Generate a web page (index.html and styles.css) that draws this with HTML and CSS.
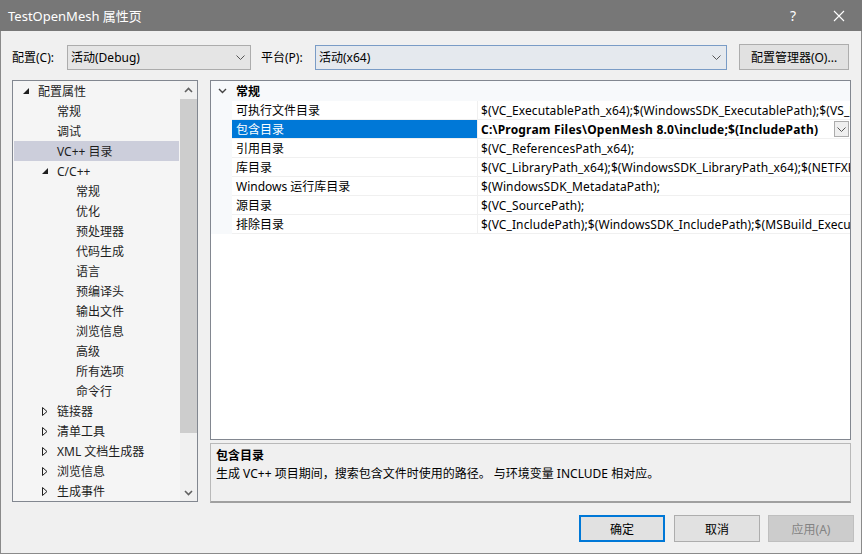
FILE: index.html
```html
<!DOCTYPE html>
<html>
<head lang="zh">
    <meta charset="utf-8">
    <title>TestOpenMesh 属性页</title>
    <link rel="stylesheet" href="styles.css">
</head>
<body>
<div class="window">
    <div class="titlebar">
        <span class="title">TestOpenMesh 属性页</span>
        <span class="cap help">?</span>
        <span class="cap close">
            <svg width="12" height="12" viewBox="0 0 12 12"><path d="M1 1L11 11M11 1L1 11" stroke="#fff" stroke-width="1.1" fill="none"/></svg>
        </span>
    </div>

    <div class="toolbar">
        <span class="lbl lbl-cfg">配置(C):</span>
        <div class="combo combo-cfg">
            <span class="combo-text">活动(Debug)</span>
            <svg width="9" height="5" viewBox="0 0 9 5"><polyline points="0.5,0.5 4.5,4.5 8.5,0.5" stroke="#555" fill="none"/></svg>
        </div>
        <span class="lbl lbl-plat">平台(P):</span>
        <div class="combo combo-plat">
            <span class="combo-text">活动(x64)</span>
            <svg width="9" height="5" viewBox="0 0 9 5"><polyline points="0.5,0.5 4.5,4.5 8.5,0.5" stroke="#555" fill="none"/></svg>
        </div>
        <div class="btn btn-mgr">配置管理器(O)...</div>
    </div>

    <div class="main">
        <div class="tree">
            <div class="tree-list">
                <div class="trow l0"><span class="arrow"><svg width="6" height="6" viewBox="0 0 6 6"><polygon points="6,0 6,6 0,6" fill="#1e1e1e"/></svg></span>配置属性</div>
                <div class="trow l1"><span class="arrow"></span>常规</div>
                <div class="trow l1"><span class="arrow"></span>调试</div>
                <div class="trow l1 sel"><span class="arrow"></span>VC++ 目录</div>
                <div class="trow l1"><span class="arrow"><svg width="6" height="6" viewBox="0 0 6 6"><polygon points="6,0 6,6 0,6" fill="#1e1e1e"/></svg></span>C/C++</div>
                <div class="trow l2"><span class="arrow"></span>常规</div>
                <div class="trow l2"><span class="arrow"></span>优化</div>
                <div class="trow l2"><span class="arrow"></span>预处理器</div>
                <div class="trow l2"><span class="arrow"></span>代码生成</div>
                <div class="trow l2"><span class="arrow"></span>语言</div>
                <div class="trow l2"><span class="arrow"></span>预编译头</div>
                <div class="trow l2"><span class="arrow"></span>输出文件</div>
                <div class="trow l2"><span class="arrow"></span>浏览信息</div>
                <div class="trow l2"><span class="arrow"></span>高级</div>
                <div class="trow l2"><span class="arrow"></span>所有选项</div>
                <div class="trow l2"><span class="arrow"></span>命令行</div>
                <div class="trow l1"><span class="arrow"><svg width="6" height="9" viewBox="0 0 6 9"><polygon points="0.5,0.5 5,4.5 0.5,8.5" stroke="#1e1e1e" fill="none"/></svg></span>链接器</div>
                <div class="trow l1"><span class="arrow"><svg width="6" height="9" viewBox="0 0 6 9"><polygon points="0.5,0.5 5,4.5 0.5,8.5" stroke="#1e1e1e" fill="none"/></svg></span>清单工具</div>
                <div class="trow l1"><span class="arrow"><svg width="6" height="9" viewBox="0 0 6 9"><polygon points="0.5,0.5 5,4.5 0.5,8.5" stroke="#1e1e1e" fill="none"/></svg></span>XML 文档生成器</div>
                <div class="trow l1"><span class="arrow"><svg width="6" height="9" viewBox="0 0 6 9"><polygon points="0.5,0.5 5,4.5 0.5,8.5" stroke="#1e1e1e" fill="none"/></svg></span>浏览信息</div>
                <div class="trow l1"><span class="arrow"><svg width="6" height="9" viewBox="0 0 6 9"><polygon points="0.5,0.5 5,4.5 0.5,8.5" stroke="#1e1e1e" fill="none"/></svg></span>生成事件</div>
            </div>
            <div class="vscroll">
                <div class="sb-btn"><svg width="9" height="6" viewBox="0 0 9 6"><polyline points="1,5 4.5,1.5 8,5" stroke="#606060" stroke-width="1.6" fill="none"/></svg></div>
                <div class="sb-track"><div class="sb-thumb"></div></div>
                <div class="sb-btn"><svg width="9" height="6" viewBox="0 0 9 6"><polyline points="1,1 4.5,4.5 8,1" stroke="#606060" stroke-width="1.6" fill="none"/></svg></div>
            </div>
        </div>

        <div class="right">
            <div class="grid">
                <div class="cat">
                    <span class="cat-arrow"><svg width="9" height="6" viewBox="0 0 9 6"><polyline points="1,1 4.5,4.5 8,1" stroke="#444" stroke-width="1.4" fill="none"/></svg></span>
                    <b>常规</b>
                </div>
                <div class="prop"><div class="pname">可执行文件目录</div><div class="pval">$(VC_ExecutablePath_x64);$(WindowsSDK_ExecutablePath);$(VS_ExecutablePath);$(MSBuild_ExecutablePath);$(FxCopDir);$(PATH);</div></div>
                <div class="prop sel"><div class="pname">包含目录</div><div class="pval"><b>C:\Program Files\OpenMesh 8.0\include;$(IncludePath)</b><span class="drop"><svg width="9" height="5" viewBox="0 0 9 5"><polyline points="0.5,0.5 4.5,4.5 8.5,0.5" stroke="#555" fill="none"/></svg></span></div></div>
                <div class="prop"><div class="pname">引用目录</div><div class="pval">$(VC_ReferencesPath_x64);</div></div>
                <div class="prop"><div class="pname">库目录</div><div class="pval">$(VC_LibraryPath_x64);$(WindowsSDK_LibraryPath_x64);$(NETFXKitsDir)Lib\um\x64</div></div>
                <div class="prop"><div class="pname">Windows 运行库目录</div><div class="pval">$(WindowsSDK_MetadataPath);</div></div>
                <div class="prop"><div class="pname">源目录</div><div class="pval">$(VC_SourcePath);</div></div>
                <div class="prop"><div class="pname">排除目录</div><div class="pval">$(VC_IncludePath);$(WindowsSDK_IncludePath);$(MSBuild_ExecutablePath);$(VC_LibraryPath_x64)</div></div>
            </div>
            <div class="desc">
                <div class="desc-title">包含目录</div>
                <div class="desc-text">生成 VC++ 项目期间，搜索包含文件时使用的路径。 与环境变量 INCLUDE 相对应。</div>
            </div>
        </div>
    </div>

    <div class="footer">
        <div class="btn btn-ok">确定</div>
        <div class="btn btn-cancel">取消</div>
        <div class="btn btn-apply">应用(A)</div>
    </div>
</div>
</body>
</html>
```

FILE: styles.css
```css
body {
    margin: 0;
    font-family: "Noto Sans", "Noto Sans CJK SC", sans-serif;
    font-size: 12px;
    color: #000;
}

.window {
    width: 862px;
    height: 554px;
    box-sizing: border-box;
    background: #f0f0f0;
    border: 1px solid #8a8a8a;
    border-top: 0;
    display: flex;
    flex-direction: column;
}

/* title bar */
.titlebar {
    height: 31px;
    margin: 0 -1px;
    background: #777777;
    color: #fff;
    display: flex;
    align-items: center;
    padding-left: 8px;
}

.title {
    flex: 1;
    font-size: 13px;
}

.cap {
    width: 46px;
    height: 31px;
    display: flex;
    align-items: center;
    justify-content: center;
}

.help {
    font-size: 14px;
}

/* config row */
.toolbar {
    display: flex;
    align-items: center;
    height: 26px;
    margin-top: 13px;
    padding-left: 11px;
}

.lbl-cfg {
    width: 55px;
}

.lbl-plat {
    width: 54px;
    margin-left: 10px;
}

.combo {
    height: 25px;
    box-sizing: border-box;
    border: 1px solid #acacac;
    background: #e5e5e5;
    display: flex;
    align-items: center;
    padding: 0 5px 0 3px;
}

.combo-text {
    flex: 1;
}

.combo-cfg {
    width: 184px;
}

.combo-plat {
    width: 412px;
    border-color: #7a9cc6;
    background: #e5e9ee;
}

.btn {
    box-sizing: border-box;
    border: 1px solid #adadad;
    background: #e1e1e1;
    display: flex;
    align-items: center;
    justify-content: center;
}

.btn-mgr {
    width: 110px;
    height: 26px;
    margin-left: 12px;
}

/* main */
.main {
    display: flex;
    align-items: flex-start;
    margin-top: 10px;
    padding-left: 11px;
}

.tree {
    width: 186px;
    height: 422px;
    box-sizing: border-box;
    border: 1px solid #828790;
    background: #f5f5f5;
    display: flex;
}

.tree-list {
    flex: 1;
    padding: 0 1px;
    overflow: hidden;
}

.trow {
    height: 20px;
    display: flex;
    align-items: center;
    white-space: nowrap;
    color: #1e1e1e;
}

.trow.sel {
    background: #cccedb;
}

.arrow {
    width: 15px;
    display: flex;
    align-items: center;
}

.l0 {
    padding-left: 9px;
}

.l1 {
    padding-left: 28px;
}

.l2 {
    padding-left: 47px;
}

.vscroll {
    width: 17px;
    display: flex;
    flex-direction: column;
    background: #f0f0f0;
}

.sb-btn {
    height: 17px;
    display: flex;
    align-items: center;
    justify-content: center;
}

.sb-track {
    flex: 1;
}

.sb-thumb {
    margin-top: 1px;
    height: 334px;
    background: #cdcdcd;
}

.right {
    width: 641px;
    margin-left: 12px;
}

.grid {
    height: 360px;
    box-sizing: border-box;
    border: 1px solid #828790;
    background: #fff;
}

.cat {
    height: 20px;
    display: flex;
    align-items: center;
    background: #f7f9fb;
}

.cat-arrow {
    width: 18px;
    padding-left: 7px;
    display: flex;
    align-items: center;
}

.prop {
    height: 19px;
    display: flex;
    padding-left: 21px;
    background: #f7f9fb;
}

.pname, .pval {
    box-sizing: border-box;
    height: 19px;
    padding-top: 1px;
    line-height: 17px;
    background: #fff;
    border-bottom: 1px solid #f0f0f0;
    white-space: nowrap;
}

.pname {
    width: 246px;
    padding-left: 4px;
    border-right: 1px solid #f0f0f0;
}

.pval {
    flex: 1;
    padding-left: 3px;
    overflow: hidden;
    position: relative;
    letter-spacing: 0.1px;
}

.pval b {
    letter-spacing: 0.2px;
}

.prop.sel .pname {
    background: #0078d7;
    color: #fff;
}

.drop {
    position: absolute;
    right: 1px;
    top: 1px;
    width: 15px;
    height: 16px;
    box-sizing: border-box;
    border: 1px solid #acacac;
    background: #efefef;
    display: flex;
    align-items: center;
    justify-content: center;
}

.desc {
    margin-top: 3px;
    height: 60px;
    box-sizing: border-box;
    border: 1px solid #b9b9b9;
    border-bottom: 2px solid #a0a0a0;
    padding: 3px 5px;
}

.desc-title {
    font-weight: bold;
    line-height: 18px;
}

.desc-text {
    line-height: 18px;
}

/* buttons */
.footer {
    display: flex;
    justify-content: flex-end;
    margin-top: 12px;
    padding-right: 7px;
}

.footer .btn {
    width: 86px;
    height: 27px;
}

.btn-ok {
    border: 2px solid #0078d7;
}

.btn-cancel {
    margin-left: 9px;
}

.btn-apply {
    margin-left: 8px;
    background: #cccccc;
    border-color: #bfbfbf;
    color: #838383;
}
```
